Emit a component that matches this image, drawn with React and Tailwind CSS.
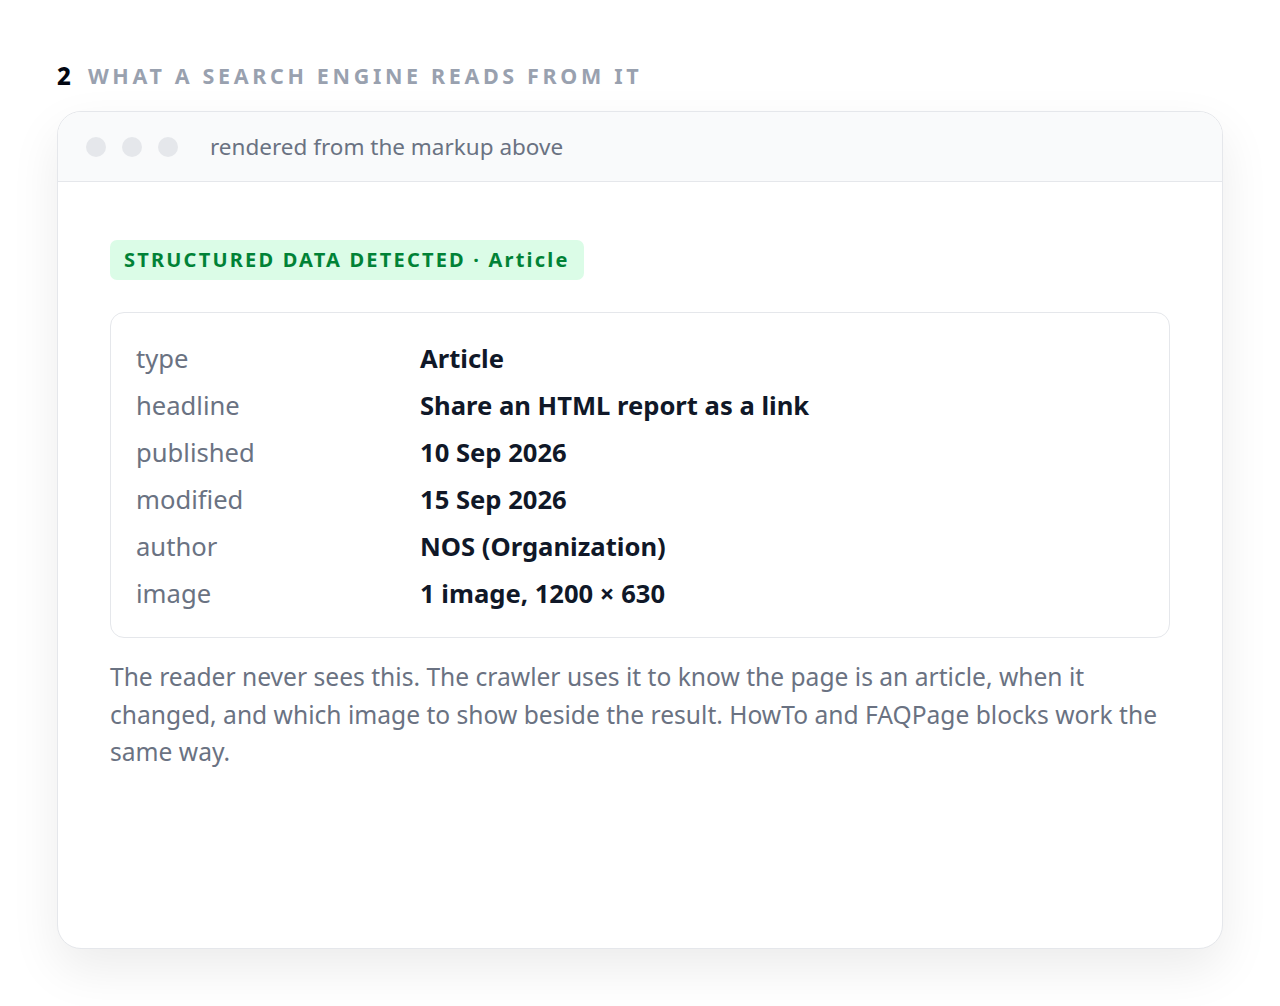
import React from 'react';

const rows = [
    ['type', 'Article'],
    ['headline', 'Share an HTML report as a link'],
    ['published', '10 Sep 2026'],
    ['modified', '15 Sep 2026'],
    ['author', 'NOS (Organization)'],
    ['image', '1 image, 1200 × 630'],
];

export default function App() {
    return (
        <div className="min-h-[1006px] bg-white px-[57px] pt-[60px] font-['Noto_Sans',sans-serif]">
            {/* Section heading */}
            <h2 className="flex items-center gap-[17px] text-[21.5px] leading-[32px] font-bold uppercase">
                <span className="text-[24px] font-extrabold text-gray-950">2</span>
                <span className="tracking-[0.17em] text-gray-400">What a search engine reads from it</span>
            </h2>

            {/* Window card */}
            <div className="mt-[19px] h-[838px] rounded-[24px] border border-gray-200 bg-white shadow-[0_20px_50px_rgba(0,0,0,0.08)] overflow-hidden">
                <div className="flex h-[70px] items-center border-b border-gray-200 bg-gray-50 pl-[28px]">
                    <div className="flex gap-[16px]">
                        <span className="h-[20px] w-[20px] rounded-full bg-gray-200" />
                        <span className="h-[20px] w-[20px] rounded-full bg-gray-200" />
                        <span className="h-[20px] w-[20px] rounded-full bg-gray-200" />
                    </div>
                    <span className="ml-[32px] text-[22.5px] text-gray-500">rendered from the markup above</span>
                </div>

                <div className="px-[52px] pt-[58px]">
                    <div className="inline-flex h-[40px] items-center rounded-[7px] bg-green-100 px-[14px] text-[20px] font-bold tracking-[0.11em] text-green-700">
                        STRUCTURED DATA DETECTED · Article
                    </div>

                    <div className="mt-[32px] rounded-[14px] border border-gray-200 px-[25px] pt-[22px] pb-[20px]">
                        {rows.map(([k, v]) => (
                            <div key={k} className="grid grid-cols-[284px_1fr] text-[25.6px] leading-[47px]">
                                <span className="text-gray-500">{k}</span>
                                <span className="font-bold text-gray-900">{v}</span>
                            </div>
                        ))}
                    </div>

                    <p className="mt-[20px] text-[24.6px] leading-[37.5px] text-gray-500">
                        The reader never sees this. The crawler uses it to know the page is an article, when it changed, and which image to show beside the result. HowTo and FAQPage blocks work the same way.
                    </p>
                </div>
            </div>
        </div>
    );
}
